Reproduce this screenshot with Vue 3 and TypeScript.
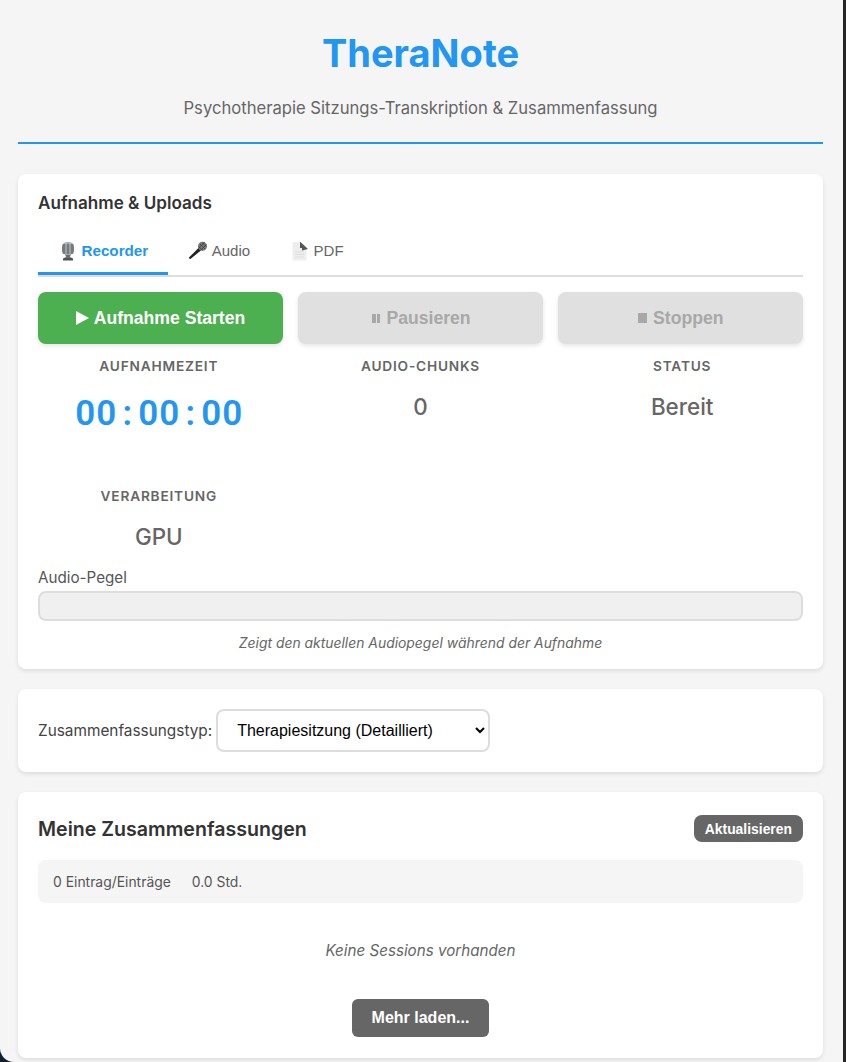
<script setup lang="ts">
const stats: { label: string; value: string; timer?: boolean }[] = [
  { label: 'Aufnahmezeit', value: '00:00:00', timer: true },
  { label: 'Audio-Chunks', value: '0' },
  { label: 'Status', value: 'Bereit' },
  { label: 'Verarbeitung', value: 'GPU' },
]
</script>

<template>
  <div class="screen">
    <div class="page">
      <header class="head">
        <h1>TheraNote</h1>
        <p>Psychotherapie Sitzungs-Transkription &amp; Zusammenfassung</p>
      </header>

      <section class="card rec">
        <h2>Aufnahme &amp; Uploads</h2>
        <nav class="tabs">
          <button class="tab active">
            <svg class="ic" width="20" height="20" viewBox="0 0 20 20">
              <path d="M5 18c0-1.300 2.200-1.800 5-1.800s5 .5 5 1.800v1.500H5z" fill="#4e5356" />
              <path d="M7 13h6l-1.300 4H8.300z" fill="#6a6f72" />
              <rect x="4" y="1" width="12" height="13" rx="5" fill="#a4aaad" />
              <path d="M4.500 4h11M4 6h12M4 8h12M4 10h12M4.500 12h11" stroke="#3c4245" stroke-width=".9" />
              <path d="M8 1.500v12M12 1.500v12" stroke="#e2e5e5" stroke-width=".9" opacity=".8" />
            </svg>
            Recorder
          </button>
          <button class="tab">
            <svg class="ic" width="20" height="20" viewBox="0 0 20 20">
              <path d="M11 6.500 1.200 16.300c-.6.700.8 2.200 1.500 1.500L13.500 9z" fill="#222" />
              <circle cx="14.500" cy="5.300" r="4.500" fill="#7b7b7b" />
              <path d="M12 3l5 5M14 1.300l4.300 4.300M10.700 5.500l3.800 3.800M16.500 1.300l-5.500 5.500M18.500 3.500l-5.500 5.500" stroke="#333" stroke-width=".7" />
            </svg>
            Audio
          </button>
          <button class="tab">
            <svg class="ic" width="20" height="20" viewBox="0 0 20 20">
              <path d="M2.500 1h8l6 7v11.500h-14z" fill="#eee" />
              <path d="M5 11h9M5 13.500h9M5 16h9" stroke="#dedede" stroke-width="1" />
              <path d="M10 1v6h2v2.500L18 8l-7.500-7z" fill="#565656" />
            </svg>
            PDF
          </button>
        </nav>

        <div class="actions">
          <button class="btn start"><span class="tri"></span>Aufnahme Starten</button>
          <button class="btn off"><span class="bars"><i></i><i></i></span>Pausieren</button>
          <button class="btn off"><span class="sq"></span>Stoppen</button>
        </div>

        <div class="stats">
          <div v-for="s in stats" :key="s.label" class="stat">
            <div class="label">{{ s.label }}</div>
            <div v-if="s.timer" class="timer">
              <span v-for="(c, i) in s.value" :key="i">{{ c }}</span>
            </div>
            <div v-else class="value">{{ s.value }}</div>
          </div>
        </div>

        <div class="level-label">Audio-Pegel</div>
        <div class="meter"></div>
        <p class="hint">Zeigt den aktuellen Audiopegel während der Aufnahme</p>
      </section>

      <section class="card type">
        <label for="sumtype">Zusammenfassungstyp:</label>
        <select id="sumtype">
          <option>Therapiesitzung (Detailliert)</option>
        </select>
      </section>

      <section class="card list">
        <div class="list-head">
          <h2>Meine Zusammenfassungen</h2>
          <button class="refresh">Aktualisieren</button>
        </div>
        <div class="summary"><span>0 Eintrag/Einträge</span><span>0.0 Std.</span></div>
        <p class="empty">Keine Sessions vorhanden</p>
        <div class="more-wrap"><button class="more">Mehr laden...</button></div>
      </section>
    </div>
  </div>
</template>

<style>
html, body { margin: 0; background: #2a2a2a; }
</style>

<style scoped>
* { box-sizing: border-box; }
.screen {
  width: 846px;
  height: 1062px;
  overflow: hidden;
  background: linear-gradient(to right, #10202e 0 50%, #262626 50%);
}
.page {
  width: 843px;
  height: 1062px;
  padding: 0 20px 0 18px;
  background: #f5f5f5;
  border-bottom-left-radius: 14px;
  font-family: Inter, "Liberation Sans", sans-serif;
  color: #333;
  overflow: hidden;
}
.head {
  height: 144px;
  text-align: center;
  border-bottom: 2px solid #2196f3;
  margin-bottom: 30px;
}
h1 {
  margin: 0;
  padding-top: 31px;
  font-size: 38px;
  line-height: 44px;
  font-weight: 700;
  color: #2196f3;
}
.head p {
  margin: 23px 0 0;
  font-size: 16.640px;
  line-height: 20px;
  color: #666;
}
.card {
  background: #fff;
  border-radius: 8px;
  box-shadow: 0 2px 4px rgba(0, 0, 0, 0.1);
  padding: 0 20px;
  margin-bottom: 20px;
}
.rec { height: 495px; padding-top: 19px; }
h2 { margin: 0; color: #333; }
.rec h2 { font-size: 17.100px; line-height: 20px; font-weight: 600; }
.tabs {
  display: flex;
  margin-top: 16px;
  height: 48px;
  border-bottom: 2px solid #ddd;
}
.tab {
  display: flex;
  align-items: center;
  justify-content: center;
  gap: 3.500px;
  height: 46px;
  padding: 0 20px;
  border: 0;
  border-bottom: 3px solid transparent;
  background: none;
  font-family: "Liberation Sans", sans-serif;
  font-size: 15px;
  color: #666;
}
.tab.active { color: #2196f3; font-size: 15.200px; font-weight: 700; border-bottom-color: #2196f3; }
.ic { flex: none; }
.actions {
  display: grid;
  grid-template-columns: repeat(3, 1fr);
  gap: 15px;
  margin-top: 15px;
}
.btn {
  display: flex;
  align-items: center;
  justify-content: center;
  height: 52px;
  border: 0;
  border-radius: 8px;
  font-family: "Liberation Sans", sans-serif;
  font-size: 17.600px;
  font-weight: 700;
  box-shadow: 0 2px 4px rgba(0, 0, 0, 0.1);
}
.start { background: #4caf50; color: #fff; }
.off { background: #e0e0e0; color: #a8a8a8; }
.tri {
  width: 0; height: 0;
  margin-right: 5px;
  border-left: 13px solid #fff;
  border-top: 7.500px solid transparent;
  border-bottom: 7.500px solid transparent;
}
.bars { display: flex; gap: 1.500px; margin: 0 6px 0 2px; }
.bars i { display: block; width: 3.300px; height: 9px; background: #a8a8a8; }
.sq { width: 9.500px; height: 9.500px; background: #a8a8a8; margin-right: 6px; }
.stats {
  display: grid;
  grid-template-columns: repeat(3, 1fr);
  grid-template-rows: 110px 81px;
  gap: 20px;
  margin-top: 12px;
}
.stat { text-align: center; }
.label {
  font-size: 13.700px;
  line-height: 20px;
  font-weight: 600;
  text-transform: uppercase;
  letter-spacing: 0.8px;
  color: #666;
}
.value {
  margin-top: 16px;
  font-size: 22.400px;
  line-height: 30px;
  font-weight: 500;
  color: #666;
}
.timer {
  display: flex;
  justify-content: center;
  margin-top: 16px;
  font-family: Roboto, "Liberation Sans", sans-serif;
  font-size: 35px;
  line-height: 44px;
  font-weight: 600;
  color: #2196f3;
}
.timer span { width: 21px; text-align: center; }
.level-label { font-size: 15.200px; line-height: 22px; color: #555; }
.meter {
  height: 30px;
  margin-top: 2px;
  border: 2px solid #ddd;
  border-radius: 8px;
  background: #f0f0f0;
}
.hint {
  margin: 13px 0 0;
  text-align: center;
  font-size: 13.900px;
  line-height: 18px;
  font-style: italic;
  color: #666;
}
.type {
  display: flex;
  align-items: center;
  gap: 4px;
  height: 83px;
}
.type label { font-size: 15.360px; color: #444; }
select {
  width: 274px;
  height: 43px;
  padding: 0 15px;
  background: #fff;
  border: 2px solid #ddd;
  border-radius: 8px;
  font-family: "Liberation Sans", sans-serif;
  font-size: 16px;
  color: #000;
}
.list { height: 266px; margin-bottom: 0; }
.list-head {
  display: flex;
  justify-content: space-between;
  align-items: center;
  padding: 23px 0 18px;
  height: 68px;
}
.list-head h2 { font-size: 19.600px; font-weight: 600; }
.refresh {
  height: 27px;
  padding: 0 11px;
  border: 0;
  border-radius: 8px;
  background: #666;
  color: #fff;
  font-family: "Liberation Sans", sans-serif;
  font-size: 13.900px;
  font-weight: 700;
}
.summary {
  display: flex;
  gap: 21px;
  align-items: center;
  height: 43px;
  padding: 0 15px;
  border-radius: 8px;
  background: #f5f5f5;
  font-size: 13.900px;
  color: #555;
}
.empty {
  margin: 38px 0 0;
  text-align: center;
  font-size: 15.200px;
  line-height: 20px;
  font-style: italic;
  color: #666;
}
.more-wrap { display: flex; justify-content: center; margin-top: 38px; }
.more {
  width: 137px;
  height: 38px;
  border: 0;
  border-radius: 6px;
  background: #666;
  color: #fff;
  font-family: "Liberation Sans", sans-serif;
  font-size: 16px;
  font-weight: 700;
}
</style>
